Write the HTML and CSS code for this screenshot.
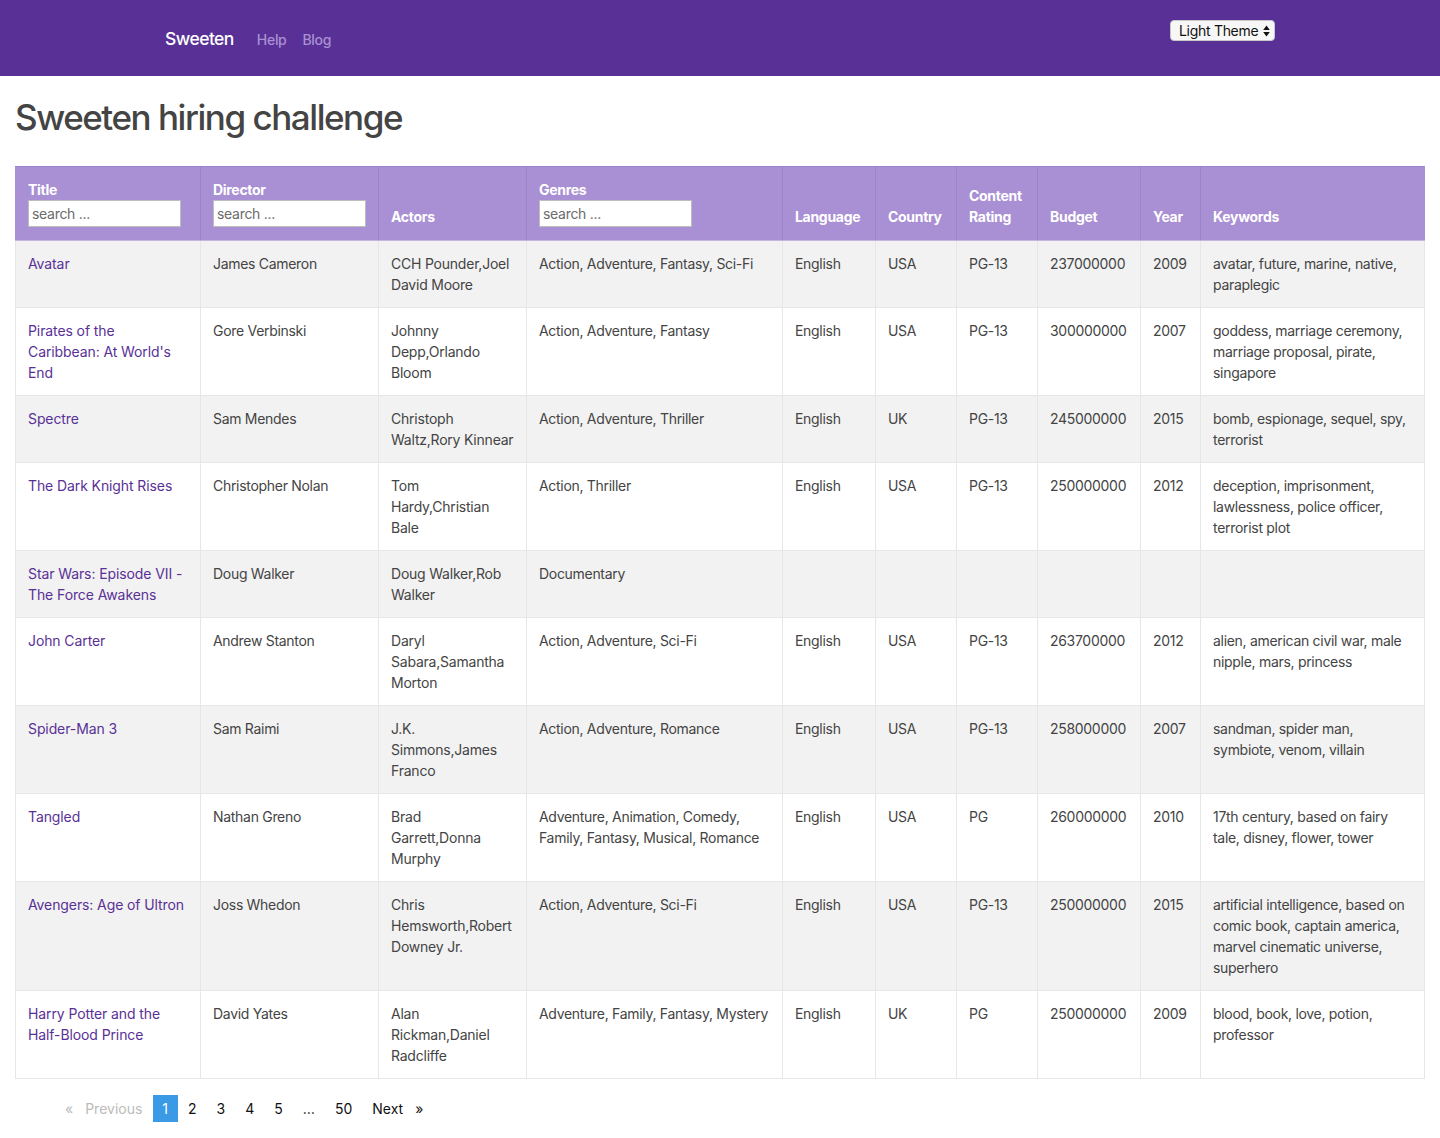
FILE: index.html
```html
<!DOCTYPE html>
<html lang="en">
<head>
<meta charset="utf-8">
<title>Sweeten hiring challenge</title>
<link rel="stylesheet" href="styles.css">
</head>
<body>
<nav class="navbar">
  <div class="nav-inner">
    <a class="brand" href="#">Sweeten</a>
    <a class="nav-link" href="#">Help</a>
    <a class="nav-link" href="#">Blog</a>
    <div class="spacer"></div>
    <div class="theme-select">
      <span>Light Theme</span>
      <svg class="arrows" width="7" height="12" viewBox="0 0 7 12"><path d="M3.5 0.5 L6.8 5 H0.2 Z M3.5 11.5 L6.8 7 H0.2 Z" fill="#111"/></svg>
    </div>
  </div>
</nav>
<main class="content">
  <h1 class="page-title">Sweeten hiring challenge</h1>
  <table class="movies">
    <colgroup>
      <col class="c-title"><col class="c-director"><col class="c-actors"><col class="c-genres"><col class="c-lang"><col class="c-country"><col class="c-rating"><col class="c-budget"><col class="c-year"><col class="c-keywords">
    </colgroup>
    <thead>
      <tr>
        <th><div>Title</div><input class="search" type="text" placeholder="search ..."></th>
        <th><div>Director</div><input class="search" type="text" placeholder="search ..."></th>
        <th>Actors</th>
        <th><div>Genres</div><input class="search" type="text" placeholder="search ..."></th>
        <th>Language</th>
        <th>Country</th>
        <th>Content Rating</th>
        <th>Budget</th>
        <th>Year</th>
        <th>Keywords</th>
      </tr>
    </thead>
    <tbody>
      <tr><td><a href="#">Avatar</a></td><td>James Cameron</td><td class="actors">CCH Pounder,Joel David Moore</td><td>Action, Adventure, Fantasy, Sci-Fi</td><td>English</td><td>USA</td><td>PG-13</td><td>237000000</td><td>2009</td><td>avatar, future, marine, native, paraplegic</td></tr>
      <tr><td><a href="#">Pirates of the Caribbean: At World's End</a></td><td>Gore Verbinski</td><td class="actors">Johnny Depp,Orlando Bloom</td><td>Action, Adventure, Fantasy</td><td>English</td><td>USA</td><td>PG-13</td><td>300000000</td><td>2007</td><td>goddess, marriage ceremony, marriage proposal, pirate, singapore</td></tr>
      <tr><td><a href="#">Spectre</a></td><td>Sam Mendes</td><td class="actors">Christoph Waltz,Rory Kinnear</td><td>Action, Adventure, Thriller</td><td>English</td><td>UK</td><td>PG-13</td><td>245000000</td><td>2015</td><td>bomb, espionage, sequel, spy, terrorist</td></tr>
      <tr><td><a href="#">The Dark Knight Rises</a></td><td>Christopher Nolan</td><td class="actors">Tom Hardy,Christian Bale</td><td>Action, Thriller</td><td>English</td><td>USA</td><td>PG-13</td><td>250000000</td><td>2012</td><td>deception, imprisonment, lawlessness, police officer, terrorist plot</td></tr>
      <tr><td><a href="#">Star Wars: Episode VII - The Force Awakens</a></td><td>Doug Walker</td><td class="actors">Doug Walker,Rob Walker</td><td>Documentary</td><td></td><td></td><td></td><td></td><td></td><td></td></tr>
      <tr><td><a href="#">John Carter</a></td><td>Andrew Stanton</td><td class="actors">Daryl Sabara,Samantha Morton</td><td>Action, Adventure, Sci-Fi</td><td>English</td><td>USA</td><td>PG-13</td><td>263700000</td><td>2012</td><td>alien, american civil war, male nipple, mars, princess</td></tr>
      <tr><td><a href="#">Spider-Man 3</a></td><td>Sam Raimi</td><td class="actors">J.K. Simmons,James Franco</td><td>Action, Adventure, Romance</td><td>English</td><td>USA</td><td>PG-13</td><td>258000000</td><td>2007</td><td>sandman, spider man, symbiote, venom, villain</td></tr>
      <tr><td><a href="#">Tangled</a></td><td>Nathan Greno</td><td class="actors">Brad Garrett,Donna Murphy</td><td>Adventure, Animation, Comedy, Family, Fantasy, Musical, Romance</td><td>English</td><td>USA</td><td>PG</td><td>260000000</td><td>2010</td><td>17th century, based on fairy tale, disney, flower, tower</td></tr>
      <tr><td><a href="#">Avengers: Age of Ultron</a></td><td>Joss Whedon</td><td class="actors">Chris Hemsworth,Robert Downey Jr.</td><td>Action, Adventure, Sci-Fi</td><td>English</td><td>USA</td><td>PG-13</td><td>250000000</td><td>2015</td><td>artificial intelligence, based on comic book, captain america, marvel cinematic universe, superhero</td></tr>
      <tr><td><a href="#">Harry Potter and the Half-Blood Prince</a></td><td>David Yates</td><td class="actors">Alan Rickman,Daniel Radcliffe</td><td>Adventure, Family, Fantasy, Mystery</td><td>English</td><td>UK</td><td>PG</td><td>250000000</td><td>2009</td><td>blood, book, love, potion, professor</td></tr>
    </tbody>
  </table>
  <ul class="pagination">
    <li class="page disabled prev"><span class="chev">«</span><span class="prev-label">Previous</span></li>
    <li class="page active">1</li>
    <li class="page">2</li>
    <li class="page">3</li>
    <li class="page">4</li>
    <li class="page">5</li>
    <li class="page">…</li>
    <li class="page">50</li>
    <li class="page next"><span>Next</span><span class="chev">»</span></li>
  </ul>
</main>
</body>
</html>
```
FILE: styles.css
```css
* { box-sizing: border-box; }
html, body { margin: 0; padding: 0; }
body {
  font-family: Inter, "Liberation Sans", Arial, sans-serif;
  font-size: 14px;
  line-height: 21px;
  letter-spacing: -0.3px;
  color: #444;
  background: #fff;
}
a { text-decoration: none; }

.navbar {
  background: #593196;
  height: 76px;
}
.nav-inner {
  width: 1140px;
  margin: 0 auto;
  padding: 0 15px;
  height: 100%;
  display: flex;
  align-items: center;
}
.brand {
  color: #fff;
  font-size: 17.5px;
  font-weight: 500;
  letter-spacing: -0.55px;
  margin-right: 23px;
}
.nav-link {
  color: #a98fd3;
  font-size: 14px;
  font-weight: 500;
  margin-right: 16px;
  padding-top: 2px;
}
.spacer { flex: 1; }
.theme-select {
  align-self: flex-start;
  margin-top: 20px;
  height: 21px;
  width: 105px;
  background: #f7f7f7;
  border: 1px solid #c8c8c8;
  border-radius: 4px;
  display: flex;
  align-items: center;
  justify-content: space-between;
  padding: 0 4px 0 8px;
  color: #111;
  font-size: 14px;
  line-height: 19px;
}
.arrows { display: block; }

.content { padding: 0 15px; }
.page-title {
  margin: 20px 0 28px;
  font-size: 35px;
  line-height: 42px;
  font-weight: 500;
  color: #444;
  letter-spacing: -1.46px;
}

.movies {
  width: calc(100% - 1px);
  border-collapse: collapse;
  table-layout: fixed;
}
.c-title { width: 185px; }
.c-director { width: 178px; }
.c-actors { width: 148px; }
.c-genres { width: 256px; }
.c-lang { width: 93px; }
.c-country { width: 81px; }
.c-rating { width: 81px; }
.c-budget { width: 103px; }
.c-year { width: 60px; }
.c-keywords { width: 224px; }

.movies th {
  background: #a98fd3;
  color: #fff;
  font-weight: 700;
  text-align: left;
  vertical-align: bottom;
  padding: 12px 12px 13px;
  border: 1px solid #9d81cb;
  border-bottom-color: #c5b6df;
}
.movies thead tr { height: 74px; }
.movies th:first-child { border-left-color: #a98fd3; }
.movies th:last-child { border-right-color: #a98fd3; }
.search {
  display: block;
  width: 153px;
  height: 27px;
  border: 1px solid #bdbdbd;
  background: #fff;
  padding: 0 3px;
  font-family: inherit;
  font-size: 14px;
  letter-spacing: -0.3px;
  color: #444;
}
.search::placeholder { color: #6b6b6b; }

.movies td {
  padding: 12px;
  vertical-align: top;
  border: 1px solid #e6e6e6;
}
.movies tbody tr:nth-child(odd) td { background: #f2f2f2; }
.movies td a { color: #593196; letter-spacing: -0.1px; }
.movies td.actors { letter-spacing: -0.22px; }

.pagination {
  list-style: none;
  margin: 16px 0 0;
  padding: 0 0 0 40px;
  display: flex;
  align-items: center;
  height: 27px;
  letter-spacing: 0;
}
.page {
  height: 27px;
  padding: 0 9.5px;
  margin: 0 0.5px;
  display: flex;
  align-items: center;
  color: #111;
}
.page.active { background: #3a9ae6; color: #fff; }
.page.disabled { color: #bbb; }
.prev .chev { margin-right: 12px; }
.next .chev { margin-left: 12px; }
```
